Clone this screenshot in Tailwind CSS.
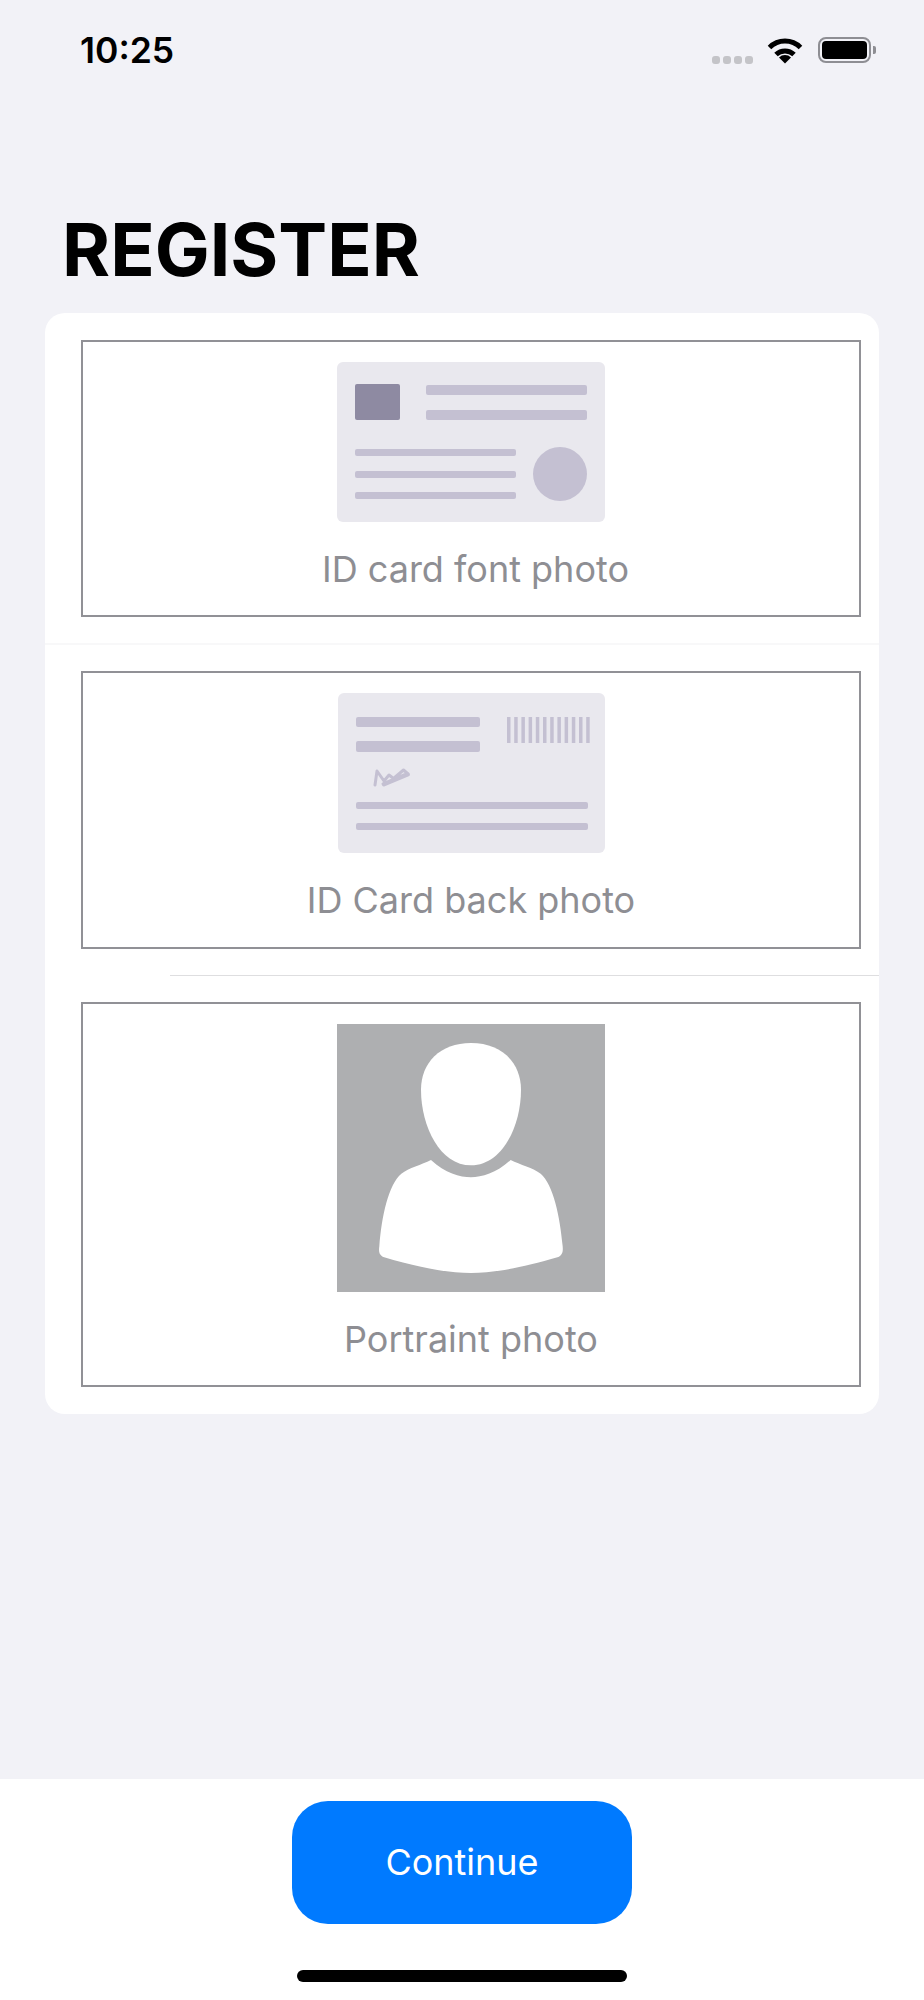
<!DOCTYPE html>
<html lang="en">
  <head>
    <meta charset="UTF-8" />
    <meta name="viewport" content="width=device-width, initial-scale=1.0" />
    <title>Register</title>
    <script src="https://cdn.jsdelivr.net/npm/@tailwindcss/browser@4"></script>
  </head>
  <body class="bg-[#f2f2f7] font-['Inter',sans-serif]">
    <div class="w-[924px] h-[2000px] flex flex-col">
      <!-- Status bar -->
      <div class="h-[40px] mt-[30px] pl-[80px] pr-[48px] flex items-center justify-between">
        <span class="mt-[2px] text-[35.5px] leading-[40px] font-semibold text-black">10:25</span>
        <div class="flex items-center">
          <div class="flex gap-[3px] mt-[20px] mr-[14px]">
            <div class="w-[8px] h-[8px] rounded-[3px] bg-[#c4c4c8]"></div>
            <div class="w-[8px] h-[8px] rounded-[3px] bg-[#c4c4c8]"></div>
            <div class="w-[8px] h-[8px] rounded-[3px] bg-[#c4c4c8]"></div>
            <div class="w-[8px] h-[8px] rounded-[3px] bg-[#c4c4c8]"></div>
          </div>
          <svg class="mr-[15px]" width="36" height="27" viewBox="0 0 36 27" fill="none">
            <path d="M2.5 10.5A22 22 0 0 1 33.5 10.5" stroke="#000" stroke-width="5" />
            <path d="M9 17.5A13 13 0 0 1 27 17.5" stroke="#000" stroke-width="5" />
            <path d="M18 26.5L12 20.5A8.5 8.5 0 0 1 24 20.5Z" fill="#000" />
          </svg>
          <div class="w-[53px] h-[26px] rounded-[8px] border-[2.5px] border-[#8e8e93] p-[2px]">
            <div class="w-full h-full rounded-[4px] bg-black"></div>
          </div>
          <div class="w-[3px] h-[8px] ml-[2px] rounded-r-[2px] bg-[#8e8e93]"></div>
        </div>
      </div>

      <!-- Title -->
      <h1 class="mt-[135px] mb-[18px] ml-[62px] text-[73.3px] leading-[90px] font-bold text-black">REGISTER</h1>

      <!-- Card -->
      <div class="mx-[45px] bg-white rounded-[20px] overflow-hidden">
        <!-- Front photo -->
        <div class="pt-[27px] pb-[26px] pl-[36px] pr-[18px] border-b-2 border-[#f8f8f9]">
          <div class="h-[277px] border-2 border-[#919196] pt-[20px] flex flex-col items-center">
            <svg width="268" height="160" viewBox="0 0 268 160">
              <rect width="268" height="160" rx="6" fill="#e9e8ee" />
              <rect x="18" y="22" width="45" height="36" rx="2" fill="#8e8aa2" />
              <rect x="89" y="23" width="161" height="10" rx="2" fill="#c4c0d2" />
              <rect x="89" y="48" width="161" height="10" rx="2" fill="#c4c0d2" />
              <rect x="18" y="87" width="161" height="7" rx="2" fill="#c4c0d2" />
              <rect x="18" y="109" width="161" height="7" rx="2" fill="#c4c0d2" />
              <rect x="18" y="130" width="161" height="7" rx="2" fill="#c4c0d2" />
              <circle cx="223" cy="112" r="27" fill="#c4c0d2" />
            </svg>
            <p class="mt-[26px] ml-[9px] text-[36px] leading-[42px] text-[#8e8e93]">ID card font photo</p>
          </div>
        </div>

        <!-- Back photo -->
        <div class="pt-[26px] pl-[36px] pr-[18px]">
          <div class="h-[278px] border-2 border-[#919196] pt-[20px] flex flex-col items-center">
            <svg width="268" height="160" viewBox="-1 0 268 160">
              <rect width="267" height="160" rx="6" fill="#e9e8ee" />
              <rect x="18" y="24" width="124" height="10" rx="2" fill="#c4c0d2" />
              <rect x="18" y="48" width="124" height="11" rx="2" fill="#c4c0d2" />
              <g fill="#c4c0d2">
                <rect x="169" y="24" width="3.5" height="26" />
                <rect x="176.2" y="24" width="3.5" height="26" />
                <rect x="183.4" y="24" width="3.5" height="26" />
                <rect x="190.6" y="24" width="3.5" height="26" />
                <rect x="197.8" y="24" width="3.5" height="26" />
                <rect x="205" y="24" width="3.5" height="26" />
                <rect x="212.2" y="24" width="3.5" height="26" />
                <rect x="219.4" y="24" width="3.5" height="26" />
                <rect x="226.6" y="24" width="3.5" height="26" />
                <rect x="233.8" y="24" width="3.5" height="26" />
                <rect x="241" y="24" width="3.5" height="26" />
                <rect x="248.2" y="24" width="3.5" height="26" />
              </g>
              <path d="M37 92L39 78L46 88L51 82L55.500 85.500L62 80L65.500 77L69.500 80.500L45 91" fill="none" stroke="#c4c0d2" stroke-width="3" stroke-linejoin="round" stroke-linecap="round" />
              <path d="M46 91.500L70 81.500" fill="none" stroke="#c4c0d2" stroke-width="4" stroke-linecap="round" />
              <rect x="18" y="109" width="232" height="7" rx="2" fill="#c4c0d2" />
              <rect x="18" y="130" width="232" height="7" rx="2" fill="#c4c0d2" />
            </svg>
            <p class="mt-[26px] text-[36px] leading-[42px] text-[#8e8e93]">ID Card back photo</p>
          </div>
        </div>
        <div class="h-px mt-[26px] ml-[125px] bg-[#dedee0]"></div>

        <!-- Portrait photo -->
        <div class="pt-[26px] pb-[27px] pl-[36px] pr-[18px]">
          <div class="h-[385px] border-2 border-[#919196] pt-[20px] flex flex-col items-center">
            <svg width="268" height="268" viewBox="51 43 804 804">
              <rect x="51" y="43" width="804" height="804" fill="#aeafb1" />
              <path d="M453 100C360 100 303 160 303 240C303 350 360 467 453 467C546 467 603 350 603 240C603 160 546 100 453 100Z" fill="#fff" />
              <path d="M333 451C375 490 420 503 453 503C486 503 530 490 572 451C600 465 640 475 662 492C700 525 720 620 728 710C730 730 725 736 715 742C600 775 520 790 453 790C386 790 300 775 190 742C180 736 175 730 178 710C185 620 205 525 244 492C266 475 305 465 333 451Z" fill="#fff" />
            </svg>
            <p class="mt-[26px] text-[36px] leading-[42px] text-[#8e8e93]">Portraint photo</p>
          </div>
        </div>
      </div>

      <div class="flex-1"></div>

      <!-- Footer -->
      <div class="h-[221px] bg-white flex flex-col items-center">
        <button class="w-[340px] h-[123px] mt-[22px] pb-[2px] rounded-[36px] bg-[#007aff] text-[36px] text-white">Continue</button>
        <div class="w-[330px] h-[12px] mt-[46px] rounded-full bg-black"></div>
      </div>
    </div>
  </body>
</html>
